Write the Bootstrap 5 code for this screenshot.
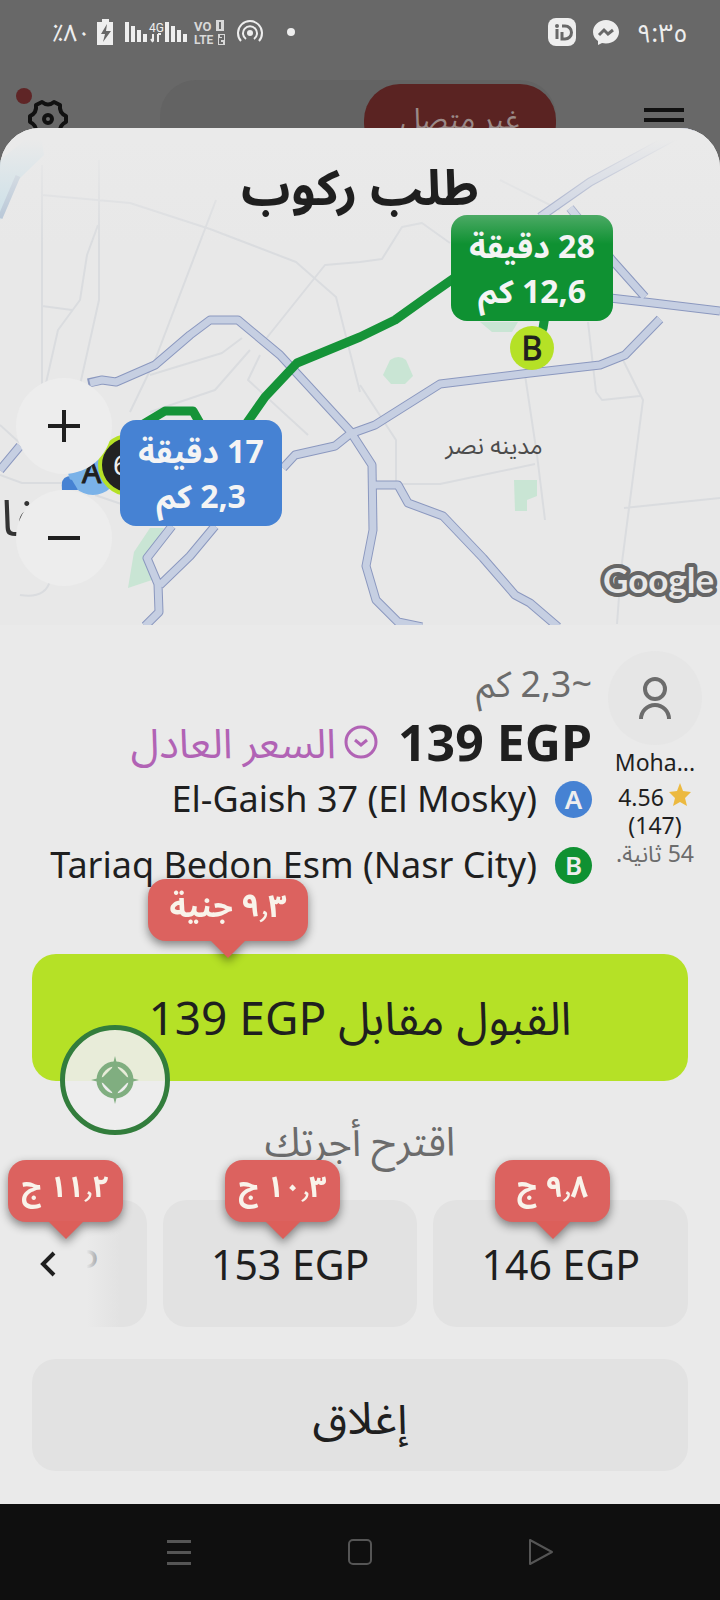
<!DOCTYPE html>
<html lang="ar" dir="rtl">
<head>
<meta charset="utf-8">
<meta name="viewport" content="width=device-width, initial-scale=1">
<title>طلب ركوب</title>
<link href="https://cdn.jsdelivr.net/npm/bootstrap@5.3.0/dist/css/bootstrap.min.css" rel="stylesheet">
<script src="https://cdn.jsdelivr.net/npm/bootstrap@5.3.0/dist/js/bootstrap.bundle.min.js" defer></script>
<style>
  body { font-family: "Noto Sans", "Noto Sans Arabic", "DejaVu Sans", sans-serif; background: #686868; color: #1f1f1f; }
  button { border: 0; color: inherit; }
  svg { display: block; }
  .statusbar { height: 64px; color: #eee; font-size: 24px; line-height: 64px; padding: 0 32px 0 52px; }
  .clock { font-size: 26px; }
  .appbar { height: 104px; margin-bottom: -40px; color: #111; }
  .gear { left: 28px; top: 35px; }
  .alert-dot { left: 16px; top: 24px; width: 16px; height: 16px; background: #5f2526; }
  .toggle-track { left: 160px; right: 164px; top: 16px; height: 88px; border-radius: 36px; background: #636363; }
  .toggle-pill { width: 192px; height: 76px; margin-top: 4px; border-radius: 36px; background: #5a2322; color: #9a8a88; font-size: 29px; line-height: 68px; }
  .menu-btn { right: 36px; top: 40px; }
  .sheet { background: #eaeaea; border-radius: 40px 40px 0 0; overflow: hidden; }
  .map { height: 497px; background: #e8e8e8; }
  .map-art { inset: 0; width: 100%; height: 100%; direction: ltr; }
  .map-title { inset: 0 0 auto 0; height: 116px; background: linear-gradient(#eaeaea 10%, #eaeaea00); font-size: 49px; line-height: 116px; }
  .trip-tag { width: 162px; height: 106px; padding: 8px 0; border-radius: 16px; color: #f4f4f4; font-size: 32px; line-height: 45px; }
  .tag-drop { left: 451px; top: 87px; background: #0f9132; }
  .tag-pick { left: 120px; top: 292px; background: #4682d3; }
  .zoom-btn { left: 16px; width: 96px; height: 96px; background: #ededed; }
  .zoom-in { top: 250px; }
  .zoom-out { top: 362px; }
  .details { padding: 25px 18px 0 32px; }
  .rider { width: 94px; font-size: 23px; line-height: 28px; padding-top: 1px; }
  .avatar { width: 94px; height: 94px; background: #e6e6e6; }
  .rider-name { line-height: 34px; margin-bottom: 4px; }
  .soft { color: #6c6c6c; }
  .distance { font-size: 36px; line-height: 68px; }
  .price { font-size: 50px; line-height: 48px; }
  .fair { color: #b163b5; font-size: 41px; line-height: 48px; }
  .fair-icon { margin-right: 20px; }
  .stop { font-size: 36px; line-height: 66px; }
  .stop-mark { width: 37px; height: 37px; margin-left: 18px; font-size: 26px; line-height: 37px; color: #eee; }
  .mark-a { background: #4682d3; }
  .mark-b { background: #0f9132; }
  .accept-wrap { margin: 56px 32px 0; }
  .accept { height: 127px; border-radius: 24px; background: #b5e126; font-size: 46px; }
  .suggest { font-size: 40px; line-height: 119px; }
  .fares { padding-right: 32px; overflow: hidden; }
  .fare { flex: 0 0 37%; height: 127px; padding-top: 4px; border-radius: 24px; background: #e2e2e2; font-size: 41px; }
  .fare-more { left: 0; top: 0; width: 120px; height: 127px; padding: 0 0 0 40px; background: linear-gradient(90deg, #eaeaea 72%, #eaeaea00); }
  .close-btn { height: 112px; margin: 32px 32px 33px; padding-top: 4px; border-radius: 24px; background: #e2e2e2; font-size: 45px; }
  .rate { width: 115px; height: 62px; border-radius: 18px; background: #dc625f; color: #f9f3ea; font-size: 30px; line-height: 52px; filter: drop-shadow(0 4px 5px #00000070); z-index: 2; }
  .rate::after { content: ""; position: absolute; left: 50%; top: 100%; margin-left: -18px; margin-top: -1px; border: 18px solid transparent; border-top-color: #dc5f5a; border-bottom: 0; }
  .rate-main { width: 160px; left: 116px; top: -75px; font-size: 32px; }
  .rate-1 { left: 495px; top: -40px; }
  .rate-2 { left: 225px; top: -40px; }
  .rate-3 { left: 8px; top: -40px; }
  .locator { width: 110px; height: 110px; left: 28px; top: 71px; border: 5px solid #327d3c; background: #ededede6; z-index: 3; }
  .navbar-os { height: 96px; background: #0f0f0f; padding: 0 88px; }
</style>
</head>
<body>
<div class="statusbar d-flex align-items-center justify-content-between" dir="ltr">
  <div class="d-flex align-items-center">
    <span>٪٨٠</span>
    <svg class="ms-1" width="210" height="32" viewBox="95 16 210 32" fill="#eee">
      <path d="M97 22h5v-3h7v3h4v23H97z"/><path d="M107 24l-6 10h4l-2 8 8-11h-5z" fill="#686868"/>
      <path d="M125 22h4v20h-4zM131 26h4v16h-4zM137 30h4v12h-4zM143 34h4v8h-4zM165 22h4v20h-4zM171 26h4v16h-4zM177 30h4v12h-4zM183 34h4v8h-4z"/>
      <text x="149" y="32" font-size="12" font-family="Roboto">4G</text>
      <path d="M153 34v7m-2-2l2 3M158 42v-8m0 0h3" stroke="#eee" stroke-width="2" fill="none"/>
      <g fill="#d8d8d8" font-weight="700" font-family="Roboto"><text x="194" y="31" font-size="13">VO</text><text x="194" y="44" font-size="12">LTE</text><path d="M216 20h8v11h-8zM218 34h7v11h-7z"/></g>
      <path d="M220 22v7M220 36h3v3h-3v4h3" stroke="#686868" stroke-width="2" fill="none"/>
      <circle cx="250" cy="33" r="3"/><g fill="none" stroke="#eee" stroke-width="2"><path d="M246 39a7 7 0 1 1 8 0M241 41a12 12 0 1 1 18 0"/></g>
      <circle cx="291" cy="32" r="4"/>
    </svg>
  </div>
  <div class="d-flex align-items-center">
    <svg width="72" height="32" viewBox="549 16 72 32" fill="#eee">
      <rect x="549" y="18" width="28" height="28" rx="8"/>
      <path d="M558 29v10M563 26h3a6 6 0 0 1 0 13h-3v-7" stroke="#686868" stroke-width="3" fill="none"/><circle cx="558" cy="26" r="2" fill="#686868"/>
      <path d="M607 20c-7 0-13 5-13 12 0 4 2 7 5 9v4l4-2c10 2 17-4 17-11s-6-12-13-12z"/><path d="M600 35l5-5 4 4 5-4" stroke="#686868" stroke-width="3" fill="none"/>
    </svg>
    <span class="clock ms-3">٩:٣٥</span>
  </div>
</div>
<header class="appbar position-relative">
  <svg class="gear position-absolute" width="40" height="40" viewBox="0 0 40 40" fill="none" stroke="#111" stroke-width="4" stroke-linejoin="round"><path d="M14 3Q20 8 26 3L32 6Q31 14 38 17V23Q31 26 32 34L26 37Q20 32 14 37L8 34Q9 26 2 23V17Q9 14 8 6Z"/><circle cx="20" cy="20" r="4"/></svg>
  <span class="alert-dot position-absolute rounded-circle"></span>
  <div class="toggle-track position-absolute d-flex"><div class="toggle-pill text-center">غير متصل</div></div>
  <button class="menu-btn position-absolute bg-transparent p-0" aria-label="القائمة"><svg width="40" height="30" viewBox="0 0 40 30" fill="#111"><path d="M0 4h40v4H0zM0 14h40v4H0zM0 24h40v4H0z"/></svg></button>
</header>
<main class="sheet position-relative">
  <section class="map position-relative">
    <svg class="map-art position-absolute" viewBox="0 128 720 497" preserveAspectRatio="xMidYMid slice" fill="none" stroke-linejoin="round">
      <path d="M0 160L40 128 44 155 18 180 0 220z" fill="#c2dde8"/><path d="M18 176L0 218" stroke="#a9bdd2" stroke-width="5"/>
      <g fill="#c9e5d4"><path d="M390 360q9-6 16 0l7 16-8 8h-14l-8-9z"/><path d="M514 480h23v16l-10 4v11h-12zM480 322h38l-6 10h-20z"/><path d="M150 528h14l-16 28 4 24-24 8 6-36z"/></g>
      <g stroke="#dadcdf" stroke-width="2">
        <path d="M42 165V390M99 160V300L80 385M98 225L87 255 80 300 58 330 46 383M42 306l30 4M42 195l88 8 80 26 86 33 40 35 24 95M216 200L155 360 130 412M150 375l72-22 20-15M265 340l60-75 35-3M360 262l22-3 20-32 20-4 28 20M250 350L215 390 150 412M260 355L248 380l60 55M500 180l60 30"/>
        <path d="M525 375l12 80 8 65M588 322l8 70 6 8 38-4M623 360l20 40-22 170-4 54M360 385l36 55v44l44 0 95-20M624 508l96-10M0 425l22 20M0 475l22 8h40M95 495l35 12M20 595q25 4 30-14"/>
      </g>
      <g stroke="#8b98bf" stroke-width="9">
        <path d="M88 383l14-3 14 2 39-17 35-30 20-15h28l42 35 70 76 22 34 1 65-7 36 10 34 22 22 24 5"/>
        <path d="M283 468l12-13 40-9 15-12 25-9 65-41 90-11 70-8 25-10 35-36M375 485h23l10 18 35 13 40 42 32 37 15 8 28 24M172 526l-25 32 11 26 1 28-14 14M215 526l-25 30-30 29M540 217l50-35 105-57M570 208l42 52 33 37M610 298l35 4 75 9M0 470l20-24"/>
      </g>
      <g stroke="#c6cfe2" stroke-width="7">
        <path d="M90 383l12-3 14 2 39-17 35-30 20-15h28l42 35 70 76 22 34 1 65-7 36 10 34 22 22 24 5"/>
        <path d="M283 468l12-13 40-9 15-12 25-9 65-41 90-11 70-8 25-10 35-36M375 485h23l10 18 35 13 40 42 32 37 15 8 28 24M172 526l-25 32 11 26 1 28-14 14M215 526l-25 30-30 29M540 217l50-35 105-57M570 208l42 52 33 37M610 298l35 4 75 9M0 470l20-24"/>
      </g>
      <path d="M246 424l19-27 32-34 63-26 35-17 35-25 30-21M140 426l25-15h28l8 14M546 310l-3 18-7 16" stroke="#159338" stroke-width="9"/>
      <text x="494" y="454" text-anchor="middle" font-size="24" fill="#4b4b4b">مدينه نصر</text>
      <text x="1" y="536" font-size="50" fill="#333">فا</text>
      <path d="M62 484q0-9 12-8l30 15z" fill="#4682d3"/><circle cx="93" cy="470" r="25" fill="#7ab2e8"/><path d="M62 490q-2-14 10-10l6 10z" fill="#4682d3"/><text x="82" y="483" font-size="30" fill="#1f1f1f" stroke="#1f1f1f">A</text>
      <circle cx="129" cy="465" r="29" fill="#222" stroke="#b5e126" stroke-width="4"/><text x="113" y="475" font-size="28" fill="#eee">6</text>
      <circle cx="532" cy="348" r="22" fill="#b5e126"/><text x="532" y="360" font-size="32" text-anchor="middle" fill="#1f1f1f" stroke="#1f1f1f">B</text>
      <text x="603" y="593" font-family="Lato, sans-serif" font-weight="700" font-size="35" fill="#e8e8e8" stroke="#666" stroke-width="8" paint-order="stroke">Google</text>
    </svg>
    <div class="trip-tag tag-drop position-absolute text-center fw-bold">28 دقيقة<br>12,6 كم</div>
    <div class="trip-tag tag-pick position-absolute text-center fw-bold">17 دقيقة<br>2,3 كم</div>
    <button class="zoom-btn zoom-in position-absolute rounded-circle p-0" aria-label="تكبير"><svg class="mx-auto" width="32" height="32" viewBox="0 0 32 32"><path d="M16 0v32M0 16h32" stroke="#1f1f1f" stroke-width="4"/></svg></button>
    <button class="zoom-btn zoom-out position-absolute rounded-circle p-0" aria-label="تصغير"><svg class="mx-auto" width="32" height="32" viewBox="0 0 32 32"><path d="M0 16h32" stroke="#1f1f1f" stroke-width="4"/></svg></button>
    <h1 class="map-title position-absolute text-center fw-bold m-0">طلب ركوب</h1>
  </section>

  <section class="details d-flex">
    <div class="rider text-center flex-shrink-0">
      <div class="avatar rounded-circle d-flex align-items-center justify-content-center">
        <svg width="34" height="44" viewBox="0 0 34 44" fill="none" stroke="#6c6c6c" stroke-width="4"><circle cx="17" cy="13" r="10"/><path d="M3 43a14 14 0 0 1 28 0"/></svg>
      </div>
      <div class="rider-name" dir="ltr">Moha...</div>
      <div class="d-flex justify-content-center gap-1" dir="ltr"><span>4.56</span><svg width="24" height="24" viewBox="0 0 24 24" fill="#ecb93f"><path d="M12 0l3 8 8 1-6 6 2 8-7-4-7 4 2-8-6-6 8-1z"/></svg></div>
      <div dir="ltr">(147)</div>
      <div class="soft text-nowrap">54 ثانية.</div>
    </div>
    <div class="flex-grow-1 pe-3">
      <div class="distance soft">~2,3 كم</div>
      <div class="d-flex align-items-center">
        <bdi class="price fw-bold" dir="ltr">139 EGP</bdi>
        <svg class="fair-icon ms-2 flex-shrink-0" width="34" height="34" viewBox="0 0 34 34" fill="none" stroke="#b163b5" stroke-width="3"><circle cx="17" cy="17" r="15"/><path d="M11 15l6 5 6-5"/></svg>
        <span class="fair text-nowrap">السعر العادل</span>
      </div>
      <div class="stop d-flex align-items-center"><span class="stop-mark mark-a rounded-circle text-center fw-semibold">A</span><bdi dir="ltr">El-Gaish 37 (El Mosky)</bdi></div>
      <div class="stop d-flex align-items-center"><span class="stop-mark mark-b rounded-circle text-center fw-semibold">B</span><bdi class="text-nowrap" dir="ltr">Tariaq Bedon Esm (Nasr City)</bdi></div>
    </div>
  </section>

  <div class="accept-wrap position-relative">
    <button class="accept w-100">القبول مقابل <bdi dir="ltr">139 EGP</bdi></button>
    <span class="rate rate-main position-absolute text-center fw-bold">٩٫٣ جنية</span>
    <span class="locator position-absolute rounded-circle d-flex align-items-center justify-content-center">
      <svg width="48" height="48" viewBox="0 0 48 48" fill="#80ae80"><path d="M24 0l3 12 9 9 12 3-12 3-9 9-3 12-3-12-9-9-12-3 12-3 9-9z"/><circle cx="24" cy="24" r="16" fill="none" stroke="#80ae80" stroke-width="5"/></svg>
    </span>
  </div>
  <p class="suggest soft text-center m-0">اقترح أجرتك</p>
  <div class="position-relative">
    <div class="fares d-flex gap-3 position-relative">
      <button class="fare"><bdi dir="ltr">146 EGP</bdi></button>
      <button class="fare"><bdi dir="ltr">153 EGP</bdi></button>
      <button class="fare"><bdi dir="ltr">160 EGP</bdi></button>
      <button class="fare-more position-absolute" dir="ltr" aria-label="المزيد"><svg width="16" height="26" viewBox="0 0 16 26" fill="none" stroke="#1f1f1f" stroke-width="4"><path d="M14 2L3 13l11 11"/></svg></button>
    </div>
    <span class="rate rate-1 position-absolute text-center fw-bold">٩٫٨ ج</span>
    <span class="rate rate-2 position-absolute text-center fw-bold">١٠٫٣ ج</span>
    <span class="rate rate-3 position-absolute text-center fw-bold">١١٫٢ ج</span>
  </div>
  <div class="d-flex"><button class="close-btn flex-grow-1">إغلاق</button></div>
</main>
<nav class="navbar-os d-flex align-items-center justify-content-around" dir="ltr">
  <button class="bg-transparent p-0" aria-label="التطبيقات"><svg width="26" height="26" viewBox="0 0 26 26" fill="#555"><path d="M1 1h24v3H1zM1 12h24v3H1zM1 23h24v3H1z"/></svg></button>
  <button class="bg-transparent p-0" aria-label="الرئيسية"><svg width="26" height="26" viewBox="0 0 26 26" fill="none" stroke="#555" stroke-width="2"><rect x="2" y="1" width="22" height="24" rx="4"/></svg></button>
  <button class="bg-transparent p-0" aria-label="رجوع"><svg width="26" height="28" viewBox="0 0 26 28" fill="none" stroke="#555" stroke-width="2" stroke-linejoin="round"><path d="M2 2v24l22-12z"/></svg></button>
</nav>
</body>
</html>
